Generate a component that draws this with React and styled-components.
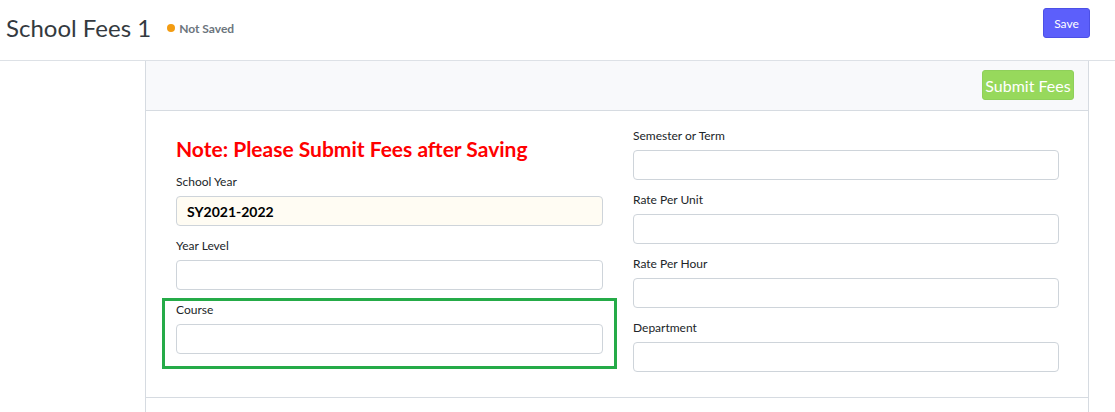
import React from 'react'
import styled, { createGlobalStyle } from 'styled-components'

const GlobalStyle = createGlobalStyle`
    * { box-sizing: border-box; }
    body {
        margin: 0;
        background: #ffffff;
        font-family: Lato, "Open Sans", sans-serif;
        color: #212529;
    }
`

const leftFields = ['School Year', 'Year Level', 'Course']
const rightFields = ['Semester or Term', 'Rate Per Unit', 'Rate Per Hour', 'Department']

const App = () => {
    return (
        <>
            <GlobalStyle />
            <Header>
                <TitleGroup>
                    <Title>School Fees 1</Title>
                    <Status>
                        <Dot />
                        Not Saved
                    </Status>
                </TitleGroup>
                <SaveButton>Save</SaveButton>
            </Header>

            <Main>
                <Panel>
                    <PanelHead>
                        <SubmitButton>Submit Fees</SubmitButton>
                    </PanelHead>

                    <PanelBody>
                        <Column>
                            <Note>Note: Please Submit Fees after Saving</Note>
                            <Field>
                                <Label>School Year</Label>
                                <Input $filled readOnly value="SY2021-2022" />
                            </Field>
                            <Field>
                                <Label>Year Level</Label>
                                <Input />
                            </Field>
                            <Field $highlight>
                                <Label>Course</Label>
                                <Input />
                            </Field>
                        </Column>

                        <Column>
                            {rightFields.map((name) => (
                                <Field key={name}>
                                    <Label>{name}</Label>
                                    <Input />
                                </Field>
                            ))}
                        </Column>
                    </PanelBody>
                </Panel>
            </Main>
        </>
    )
}

export default App

const Header = styled.div`
    height: 61px;
    display: flex;
    align-items: flex-start;
    justify-content: space-between;
    padding: 8px 25px 0 6px;
    border-bottom: 1px solid #dde1e6;
`

const TitleGroup = styled.div`
    display: flex;
    align-items: center;
    gap: 16px;
    padding-top: 6px;
`

const Title = styled.h1`
    margin: 0;
    font-size: 24px;
    font-weight: 400;
    line-height: 28px;
    color: #343a40;
`

const Status = styled.span`
    display: flex;
    align-items: center;
    gap: 4px;
    font-size: 12px;
    font-weight: 700;
    color: #6c757d;
`

const Dot = styled.span`
    width: 8px;
    height: 8px;
    border-radius: 50%;
    background: #f39c12;
`

const SaveButton = styled.button`
    width: 47px;
    height: 30px;
    border: 1px solid #4c50e6;
    border-radius: 3px;
    background: #5c5ffb;
    color: #ffffff;
    font-family: inherit;
    font-size: 12px;
    padding: 0;
`

const Main = styled.div`
    padding-left: 145px;
`

const Panel = styled.div`
    width: 944px;
    height: 351px;
    border-left: 1px solid #d6dbe1;
    border-right: 1px solid #d6dbe1;
`

const PanelHead = styled.div`
    height: 50px;
    display: flex;
    justify-content: flex-end;
    align-items: flex-start;
    padding: 9px 14px 0;
    background: #f8f9fb;
    border-bottom: 1px solid #d6dbe1;
`

const SubmitButton = styled.button`
    width: 92px;
    height: 30px;
    border: 1px solid #8fd05a;
    border-radius: 3px;
    background: #97d95c;
    color: #ffffff;
    font-family: inherit;
    font-size: 16px;
    padding: 0;
`

const PanelBody = styled.div`
    display: grid;
    grid-template-columns: 427px 426px;
    column-gap: 30px;
    padding: 16px 0 14px 30px;
    border-bottom: 1px solid #d6dbe1;
`

const Column = styled.div`
    display: flex;
    flex-direction: column;
`

const Note = styled.h2`
    margin: 10px 0 12px;
    font-size: 21px;
    font-weight: 700;
    line-height: 24px;
    color: #ff0000;
`

const Field = styled.div`
    display: flex;
    flex-direction: column;
    margin-bottom: 11px;
    ${({ $highlight }) => $highlight && `
        margin: -3px -14px 0;
        padding: 0 11px 12px;
        border: 3px solid #25ab48;
    `}
`

const Label = styled.label`
    display: block;
    font-size: 12px;
    line-height: 18px;
    margin-bottom: 5px;
    color: #212529;
`

const Input = styled.input`
    height: 30px;
    width: 100%;
    border: 1px solid #ced4da;
    border-radius: 4px;
    padding: 0 10px;
    font-family: inherit;
    font-size: 14px;
    font-weight: 700;
    color: #000000;
    background: ${({ $filled }) => ($filled ? '#fffcf3' : '#ffffff')};
`
